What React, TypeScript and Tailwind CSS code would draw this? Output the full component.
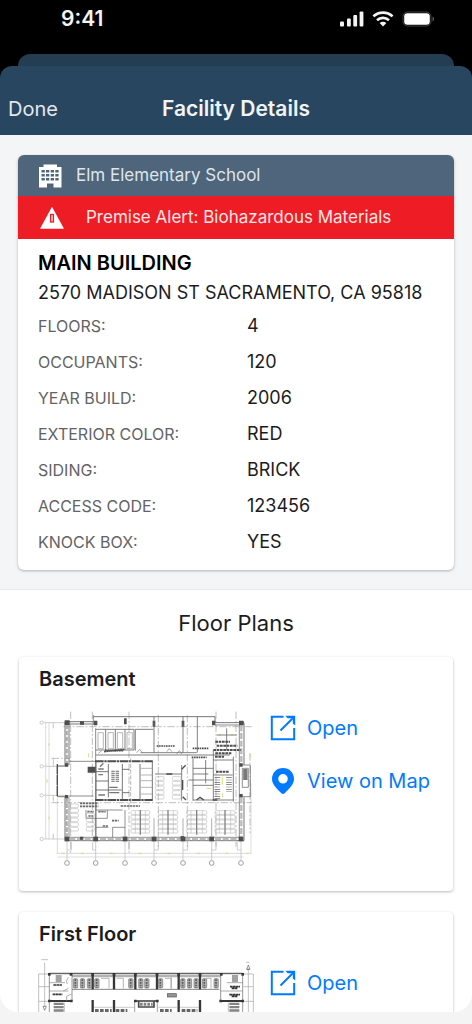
import type { ReactNode } from 'react'

const DETAILS = [
  { label: 'FLOORS:',         value: '4' },
  { label: 'OCCUPANTS:',      value: '120' },
  { label: 'YEAR BUILD:',     value: '2006' },
  { label: 'EXTERIOR COLOR:', value: 'RED' },
  { label: 'SIDING:',         value: 'BRICK' },
  { label: 'ACCESS CODE:',    value: '123456' },
  { label: 'KNOCK BOX:',      value: 'YES' },
]

/* ── Icons ── */

function SignalIcon() {
  return (
    <svg width="24" height="16" viewBox="0 0 24 16" fill="#f4f4f4">
      <rect x="0" y="10.500" width="4" height="5" rx="1" />
      <rect x="7" y="7.500" width="3.800" height="8" rx="1" />
      <rect x="13.300" y="4" width="3.800" height="11.500" rx="1" />
      <rect x="19.600" y=".5" width="3.800" height="15" rx="1" />
    </svg>
  )
}

function WifiIcon() {
  return (
    <svg width="22" height="16" viewBox="0 0 22 16" fill="none" stroke="#f4f4f4" strokeWidth="2.600">
      <path d="M1.4 5.4C6.8 .3 15.2 .3 20.6 5.4" />
      <path d="M5 9.2C8.4 6.1 13.6 6.1 17 9.2" />
      <path d="M7.6 11.9C9.6 10.2 12.4 10.2 14.4 11.9L11 15.6Z" fill="#f4f4f4" stroke="none" />
    </svg>
  )
}

function BatteryIcon() {
  return (
    <svg width="33" height="16" viewBox="0 0 33 16" fill="#fff">
      <rect x="1" y="1" width="28" height="14" rx="4.500" fill="none" stroke="#fff" strokeOpacity=".25" />
      <rect x="2.200" y="2.200" width="25.600" height="11.600" rx="3.200" />
      <path d="M30.5 5.5c2 .8 2 4.200 0 5z" fillOpacity=".35" />
    </svg>
  )
}

function BuildingIcon() {
  return (
    <svg width="24" height="24" viewBox="0 0 24 24" aria-hidden="true">
      <path fill="#fff" d="M5.500 .5h13.500v2.500h4.500v20.500H15.500v-4H9v4H1v-20.500h4.500z" />
      <g fill="#4e657b">
        {[6, 10, 14].map(y => [3.5, 8, 12.7, 17.3].map(x => (
          <rect key={`${x}-${y}`} x={x} y={y} width="3.300" height="2.500" />
        )))}
      </g>
    </svg>
  )
}

function AlertIcon() {
  return (
    <svg width="26" height="24" viewBox="0 0 26 24" aria-hidden="true">
      <path fill="#fff" d="M14 .8L26 22.800H2z" />
      <rect x="12.600" y="8.500" width="2.800" height="7.500" fill="#ffd9da" stroke="#ee1c25" strokeWidth="1.300" />
    </svg>
  )
}

function OpenIcon() {
  return (
    <svg width="26" height="26" viewBox="0 0 26 26" fill="none" stroke="#007aff" strokeWidth="2" aria-hidden="true">
      <path d="M13.500 1.800H1.800V24.200H24.200V13" />
      <path d="M10.500 15.500L22 4" />
      <path fill="#007aff" stroke="none" d="M15.500 .8H25.200V10.500L22.800 8.500V5L21 3.200H17.500z" />
    </svg>
  )
}

function PinIcon() {
  return (
    <svg width="26" height="26" viewBox="0 0 26 26" aria-hidden="true">
      <path
        fill="#007aff"
        fillRule="evenodd"
        d="M13 0C6.500 0 2 4.800 2 11c0 5.500 5 10 9.300 14.200q1.700 1.500 3.400 0C19 21 24 16.500 24 11 24 4.800 19.500 0 13 0zm0 6a4.800 4.800 0 1 1 0 9.600A4.800 4.800 0 0 1 13 6z"
      />
    </svg>
  )
}

/* ── Floor plan drawings ── */

const GRID_X = [111, 197, 285, 372, 459, 545, 633]
const GRID_Y = [68, 199, 286, 417]

// blocks of desks: x, y, width, rows
const DESKS = [
  [303, 332, 56, 5], [385, 332, 58, 5], [470, 332, 60, 5], [555, 332, 60, 5],
  [376, 230, 26, 5], [427, 230, 26, 5], [121, 312, 24, 6], [169, 340, 24, 4],
]

function BasementPlan() {
  return (
    <svg
      className="block h-auto w-full opacity-80" viewBox="18 9 660 510" fill="none" stroke="#555" strokeWidth="2"
      role="img" aria-label="Basement floor plan"
    >
      {/* grid bubbles and dimension lines */}
      <g stroke="#888" strokeWidth="1.500">
        {GRID_Y.map(y => (
          <g key={y}>
            <circle cx="35" cy={y} r="5" />
            <path d={`M42 ${y}H108`} />
          </g>
        ))}
        {GRID_X.map(x => (
          <g key={x}>
            <circle cx={x} cy="489" r="7" strokeWidth="3" />
            <path d={`M${x} 424V480`} />
          </g>
        ))}
        <path d="M47 68V417M57 68V417M82 460H663M82 471H640M82 295V462M663 250V462" stroke="#aaa" />
        <path d="M70 68V85M70 175V200M70 285V305M70 400V417M124 425V450H112M188 425V450H197M297 425V450M385 425V450H372M473 425V450H459M558 425V450H545M622 425V450H633" />
        <path
          d="M122 35V460M187 35V420M297 35V460M385 45V440M472 45V440M558 35V440M618 35V440M100 80H665M65 175H120M65 308H665M660 160V400"
          stroke="#888" strokeWidth="2" strokeDasharray="22 6 5 6"
        />
      </g>
      <g stroke="#d8cf55" strokeWidth="3">
        <path d="M57 130v8M51 238v10M57 350v8M70 75v8M70 184v8M70 292v8M70 405v8M176 160v12M660 160v14" />
        <path d="M95 460h10M152 460h10M238 460h10M325 460h10M412 460h10M500 460h10M585 460h10M567 105h6M603 105h6M648 460h8" />
        <path d="M577 232v22M530 265h14M578 280v12" />
      </g>

      {/* outer walls */}
      <path d="M105 65H198V72H117V195M105 65V198H82V290H105V422H642V292M190 50H555V68H642V195" strokeWidth="3" />
      <path d="M117 184H195M117 288H190M117 292V412H628V75H555M190 45V75M197 85V412" strokeWidth="2.500" />
      <path d="M110 74V195M110 292V410" stroke="#999" strokeWidth="7" strokeDasharray="14 4" />
      <path d="M634 76V195M634 292V410M118 417H625" stroke="#aaa" strokeWidth="7" strokeDasharray="18 5" />
      <path d="M82 192V290" stroke="#222" strokeWidth="4" strokeDasharray="30 3" />
      <path d="M632 195H661V290H632M637 205H655V262H637z" stroke="#333" />
      <path d="M646 208V240" stroke="#222" strokeWidth="13" strokeDasharray="4 2" />

      {/* columns */}
      <g fill="#222" stroke="none">
        {GRID_X.map(x => <rect key={x} x={x - 7} y="410" width="14" height="14" />)}
        <path d="M104 61h15v14h-15zM627 62h14v14h-14zM105 190h10v10h-10zM105 285h10v10h-10zM192 62h10v14h-10zM546 62h10v14h-10zM282 55h8v18h-8zM368 62h8v18h-8zM455 62h8v18h-8zM628 190h10v10h-10zM628 282h10v10h-10zM150 64h12v10h-12zM173 200h24v18h-24zM150 410h10v9h-10zM452 408h10v9h-10z" />
      </g>

      {/* classrooms along the top */}
      <path d="M197 88H312V150H197M227 88V150M256 88V155M285 88V150M316 88H370M316 88V152M372 50V158M459 50V158M502 50V158M332 158H500M197 165H600" stroke="#444" strokeWidth="2.500" />
      <path d="M204 98h16v48h-16zM234 98h16v48h-16zM262 98h16v48h-16zM291 98h16v48h-16z" stroke="#777" />
      <path d="M222 155L285 148M380 138H436M488 145H535M485 172H530M225 152h55" stroke="#222" strokeWidth="5" strokeDasharray="5 2" />
      <path d="M410 155l8-9 8 9M320 158l9-10 8 10M205 160l10-8M440 162l8-10 8 10" />

      {/* stair core */}
      <path d="M195 184H368M195 300H368" stroke="#222" strokeWidth="6" strokeDasharray="26 2 7 2" />
      <path d="M198 182V302M235 192V292M277 192V302M330 192V302M367 182V302M198 215H235M198 243H235M198 270H275M277 208H298M277 278H298" stroke="#333" strokeWidth="2.500" />
      <path d="M332 205H366M332 225H366M332 242H366M332 262H366M332 282H366" stroke="#777" />
      <path d="M249 212V248M262 212V248" stroke="#444" strokeWidth="10" strokeDasharray="3 3" />
      <path d="M205 207h16M205 224h14M238 262h25M205 285h20M210 200l10-10M238 278h30" strokeWidth="4" />
      <path d="M302 175V308" stroke="#777" strokeDasharray="12 5" />

      {/* lower-left rooms */}
      <path d="M198 308V412M285 330V412M198 382H235M248 382H285M248 382V412M198 330H278M168 330V355H232V330" stroke="#333" />
      <path d="M150 310H205M150 319H205M272 318H330M172 335h20M205 335h22M175 348h15M218 378h18M246 362h20" stroke="#444" strokeWidth="5" strokeDasharray="7 2" />

      {/* right-hand rooms */}
      <path d="M375 222H455M455 195V302M489 175V302M489 205H550M489 222H535M475 240H550M489 256H550M527 180V250M489 300H612M550 150V302M610 170V305M550 225H608M550 180H610M590 85V150M560 105H620" stroke="#444" strokeWidth="2.500" />
      <path d="M556 125H600M550 150H632M560 137H622M556 160H605M558 215H598M555 170H582" stroke="#222" strokeWidth="6" strokeDasharray="8 2" />
      <path d="M562 232V298M597 232V275" stroke="#444" strokeWidth="17" strokeDasharray="2 5" />
      <path d="M409 222h18M455 208l12-12M458 240v30M458 290l10 10M500 300l10-8 12 8M548 300h14" stroke="#222" strokeWidth="4" />

      {/* desks */}
      {DESKS.map(([x, y, w, rows]) => (
        <g key={`${x}-${y}`} stroke="#999" strokeWidth="1.500">
          {Array.from({ length: rows }, (_, i) => (
            <rect key={i} x={x} y={y + i * 14} width={w} height="11" rx="3" />
          ))}
          {w > 40 && <path d={`M${x + w / 2} ${y - 2}V${y + 72}`} stroke="#666" strokeWidth="4" />}
          {w > 40 && <path d={`M${x + 13} ${y}V${y + 68}M${x + w - 13} ${y}V${y + 68}`} />}
        </g>
      ))}
      <path d="M372 355V412M459 355V412M545 355V412" stroke="#666" />
    </svg>
  )
}

const BAYS = [278, 342, 406, 471, 536, 600]

function FirstFloorPlan() {
  return (
    <svg
      className="block h-auto w-full opacity-90" viewBox="108 204 660 510" fill="none" stroke="#666" strokeWidth="2"
      role="img" aria-label="First floor plan"
    >
      {/* section markers */}
      <path d="M134 218V350M745 238V700M124 209h20M738 217h10" stroke="#999" />
      <path d="M129 349l5 12 5-12zM740 238l5-13 5 13zM740 238h10" stroke="#555" />

      {/* outline */}
      <path d="M116 252H760M116 252V700M760 252V700M116 290H148M730 290H760M116 334H148M730 334H760" stroke="#999" />
      <path d="M148 250H216M216 250H662M662 250H728" stroke="#555" strokeWidth="4" />
      <path d="M216 258H662" stroke="#aaa" strokeWidth="8" />
      <path d="M216 298H658" stroke="#777" strokeWidth="3" />
      <path d="M148 252V700M216 252V332M662 252V332M728 252V700" stroke="#555" />
      <path d="M148 333H216M662 333H728" stroke="#222" strokeWidth="6" />

      {/* corner rooms */}
      <path d="M148 278H195M148 303H205M680 278H728M662 303H728M205 262q-10 12-3 20M190 303l15-8M200 333v-14q10-6 14-6" stroke="#777" />
      <path d="M160 285H187M158 313H187M690 290H720M688 314H720M695 295H712M695 319H712" stroke="#222" strokeWidth="5" strokeDasharray="8 1" />
      <path d="M176 256V276M705 256V276" stroke="#777" strokeWidth="18" strokeDasharray="4 2" />
      <path d="M176 338V368M703 338V368" stroke="#777" strokeWidth="30" strokeDasharray="7 3" />
      <path d="M193 338V700M685 338V700" stroke="#999" />

      {/* upper bays */}
      {BAYS.map(x => <path key={x} d={`M${x} 250V298`} stroke="#222" strokeWidth="7" />)}
      {[220, 241, 262, 284, 386, 416, 434, 475, 542, 562, 582, 607, 642].map(x => (
        <g key={x}>
          <rect x={x} y="266" width="13" height="28" rx="3" fill="#aaa" stroke="#666" />
          <path d={`M${x + 6} 268V293`} stroke="#444" strokeWidth="5" strokeDasharray="5 3" />
        </g>
      ))}
      <path d="M303 265h24v30M350 265h20v30M495 265h18v30M618 265h15v30M514 262V296" stroke="#888" />

      {/* lower bays */}
      {[278, 342, 536, 600].map(x => <path key={x} d={`M${x} 330V700`} stroke="#222" strokeWidth="7" />)}
      <path d="M282 352H338M346 352H404M475 352H532M540 352H597" stroke="#aaa" />
      <path d="M285 362H335M347 362H382M480 362H515M545 362H592" stroke="#555" strokeWidth="10" strokeDasharray="11 4" />
      <path d="M404 352V333H472V352M404 352V700M472 352V700" stroke="#666" />
      <path d="M416 334V351H462V334M404 333H472" stroke="#333" strokeWidth="5" />
      <path d="M420 343H458" stroke="#777" strokeWidth="9" strokeDasharray="8 3" />
      <rect x="502" y="311" width="27" height="10" fill="#888" stroke="#444" />

      {/* columns */}
      <g fill="#222" stroke="none">
        {[148, 213, 278, 342, 406, 471, 536, 600, 664, 728].map(x => (
          <rect key={x} x={x - 4} y="249" width="8" height="8" />
        ))}
        <path d="M144 329h8v8h-8zM210 329h8v8h-8zM402 329h8v8h-8zM468 329h8v8h-8zM658 329h8v8h-8zM724 329h8v8h-8z" />
      </g>
    </svg>
  )
}

/* ── Screen parts ── */

function FloorCard({ title, plan, onMap = false }: { title: string; plan: ReactNode; onMap?: boolean }) {
  return (
    <article className="rounded bg-white pt-[7px] pr-4 pb-[18px] pl-5 shadow-[0_1px_3px_rgba(0,0,0,0.28)]">
      <h3 className="text-xl leading-[30px] font-semibold text-[#1c1c1e]">{title}</h3>
      <div className="flex gap-[14px] pt-[9px]">
        <div className="-ml-[3px] w-[220px] shrink-0">{plan}</div>
        <div className="flex flex-col items-start gap-[27px] pt-3">
          <button type="button" className="flex items-center gap-[11px] text-xl leading-[26px] whitespace-nowrap text-[#007aff]">
            <OpenIcon />
            Open
          </button>
          {onMap && (
            <button type="button" className="flex items-center gap-[11px] text-xl leading-[26px] whitespace-nowrap text-[#007aff]">
              <PinIcon />
              View on Map
            </button>
          )}
        </div>
      </div>
    </article>
  )
}

export default function App() {
  return (
    <div className="flex h-screen flex-col bg-[#f4f4f4] pb-3 font-[Inter,'Liberation_Sans',sans-serif]">

      {/* Status bar and sheet header */}
      <div className="shrink-0 bg-black">
        <div className="flex h-[54px] items-center justify-between pr-[37px] pb-4 pl-[61px]">
          <span className="text-[21px] font-semibold text-[#f4f4f4]">9:41</span>
          <div className="flex items-center gap-2">
            <SignalIcon />
            <WifiIcon />
            <BatteryIcon />
          </div>
        </div>
        <div className="mx-[18px] h-3 rounded-t-xl bg-[#243d53]" />
        <header className="grid h-[69px] grid-cols-[1fr_auto_1fr] items-center rounded-t-xl bg-[#28465f] px-2 pt-4">
          <button type="button" className="justify-self-start text-xl text-[#e3e8ec]">Done</button>
          <h1 className="text-[21px] font-semibold text-[#f1f4f6]">Facility Details</h1>
        </header>
      </div>

      <main className="min-h-0 flex-1 overflow-y-auto rounded-b-[18px] bg-white [scrollbar-width:none]">

        {/* Facility summary */}
        <section className="border-b border-[#e8e8ea] bg-[#f4f5f7] px-[18px] pt-5 pb-[19px]">
          <div className="overflow-hidden rounded-md bg-white shadow-[0_1px_3px_rgba(0,0,0,0.28)]">
            <div className="flex h-[41px] items-center gap-[14px] bg-[#4e657b] px-5 text-[17px] text-[#dfe5ea]">
              <BuildingIcon />
              <h2>Elm Elementary School</h2>
            </div>
            <div className="flex h-[43px] items-center gap-[22px] bg-[#ee1c25] px-5 text-[17px] text-[#ffe6e7]" role="alert">
              <AlertIcon />
              <span>Premise Alert: Biohazardous Materials</span>
            </div>
            <div className="px-5 pt-[9px] pb-[10px]">
              <h3 className="text-xl leading-[30px] font-semibold text-black">MAIN BUILDING</h3>
              <p className="text-lg leading-[30px] whitespace-nowrap text-[#1c1c1e]">2570 MADISON ST SACRAMENTO, CA 95818</p>
              <dl>
                {DETAILS.map(d => (
                  <div key={d.label} className="flex h-9 items-center">
                    <dt className="w-[209px] text-base text-[#636366]">{d.label}</dt>
                    <dd className="text-lg text-[#1c1c1e]">{d.value}</dd>
                  </div>
                ))}
              </dl>
            </div>
          </div>
        </section>

        {/* Floor plans */}
        <section className="px-[19px] pt-[15px] pb-5">
          <h2 className="text-center text-[22px] leading-9 text-[#1c1c1e]">Floor Plans</h2>
          <div className="flex flex-col gap-[21px] pt-4">
            <FloorCard title="Basement" plan={<BasementPlan />} onMap />
            <FloorCard title="First Floor" plan={<FirstFloorPlan />} />
          </div>
        </section>
      </main>
    </div>
  )
}
